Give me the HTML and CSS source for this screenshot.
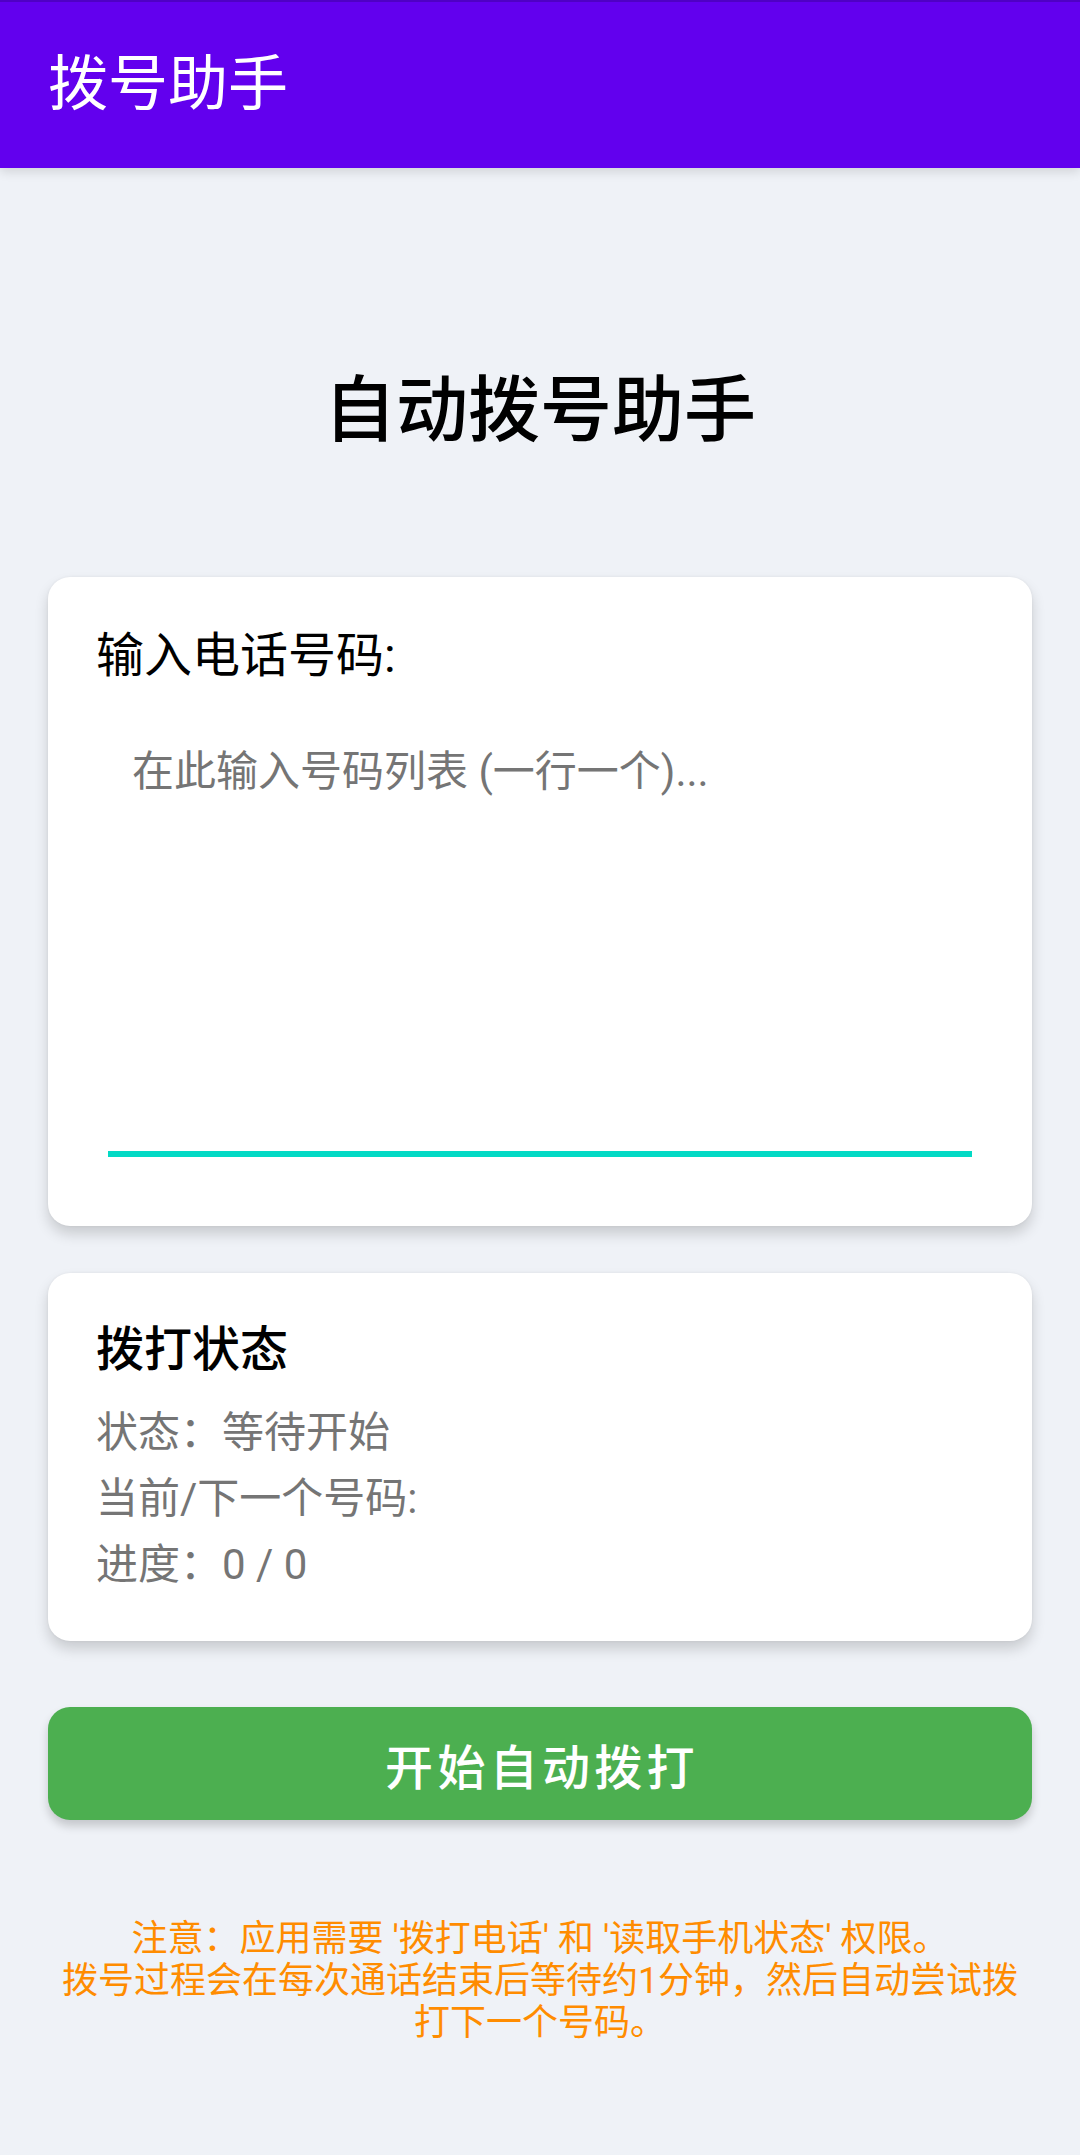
FILE: index.html
```html
<!DOCTYPE html>
<html lang="zh-CN">
<head>
    <meta charset="UTF-8">
    <meta name="viewport" content="width=device-width, initial-scale=1.0">
    <title>拨号助手</title>
    <link rel="stylesheet" href="styles.css">
</head>
<body>
    <header class="app-bar">
        <span class="app-title">拨号助手</span>
    </header>

    <main class="content">
        <h1 class="page-title">自动拨号助手</h1>

        <section class="card input-card">
            <label for="numbers" class="field-label">输入电话号码:</label>
            <textarea id="numbers" class="number-input" placeholder="在此输入号码列表 (一行一个)..."></textarea>
        </section>

        <section class="card status-card">
            <h2 class="status-title">拨打状态</h2>
            <div class="status-list">
                <p id="statusText">状态：等待开始</p>
                <p id="currentNumber">当前/下一个号码:</p>
                <p id="progress">进度：0 / 0</p>
            </div>
        </section>

        <button type="button" class="start-button">开始自动拨打</button>

        <p class="notice">
            注意：应用需要 '拨打电话' 和 '读取手机状态' 权限。<br>
            拨号过程会在每次通话结束后等待约1分钟，然后自动尝试拨打下一个号码。
        </p>
    </main>
</body>
</html>
```

FILE: styles.css
```css
body {
    font-family: Roboto, "Noto Sans CJK SC", sans-serif;
    background-color: #eff2f7;
    color: #000;
    margin: 0;
    padding: 0;
}

/* Top toolbar */
.app-bar {
    height: 168px;
    box-sizing: border-box;
    border-top: 2px solid #4f00c4;
    background-color: #6200ee;
    display: flex;
    align-items: center;
    padding-left: 48px;
    box-shadow: 0 4px 10px rgba(0, 0, 0, 0.12);
}

.app-title {
    color: #fff;
    font-size: 60px;
    line-height: 70px;
}

.content {
    padding: 193px 48px 0;
}

.page-title {
    margin: 0 0 116px;
    font-size: 72px;
    line-height: 100px;
    font-weight: 500;
    text-align: center;
}

/* White cards */
.card {
    background-color: #fff;
    border-radius: 22px;
    padding: 48px;
    box-shadow: 0 8px 14px rgba(0, 0, 0, 0.16), 0 0 3px rgba(0, 0, 0, 0.06);
}

.input-card {
    padding-top: 53px;
}

.field-label {
    display: block;
    font-size: 48px;
    line-height: 52px;
}

.number-input {
    display: block;
    box-sizing: border-box;
    width: calc(100% - 24px);
    height: 437px;
    margin: 38px 12px 21px;
    padding: 24px 24px 0;
    border: none;
    border-bottom: 6px solid #03dac5;
    outline: none;
    resize: none;
    background: transparent;
    font-family: inherit;
    font-size: 42px;
    line-height: 56px;
    color: #000;
}

.number-input::placeholder {
    color: #757575;
}

.status-card {
    margin-top: 47px;
    padding-top: 51px;
}

.status-title {
    margin: 0 0 29px;
    font-size: 48px;
    line-height: 52px;
    font-weight: 500;
}

.status-list {
    display: flex;
    flex-direction: column;
    gap: 10px;
}

.status-list p {
    margin: 0;
    font-size: 42px;
    line-height: 56px;
    color: #757575;
}

.start-button {
    display: block;
    width: 100%;
    height: 113px;
    margin-top: 66px;
    padding: 0 0 0 4px;
    border: none;
    border-radius: 22px;
    background-color: #4caf50;
    color: #fff;
    font-family: inherit;
    font-size: 48px;
    font-weight: 500;
    letter-spacing: 4.3px;
    box-shadow: 0 6px 10px rgba(0, 0, 0, 0.18);
    cursor: pointer;
}

.notice {
    margin: 98px 0 0;
    font-size: 36px;
    line-height: 42px;
    text-align: center;
    color: #ff8c00;
}
```
